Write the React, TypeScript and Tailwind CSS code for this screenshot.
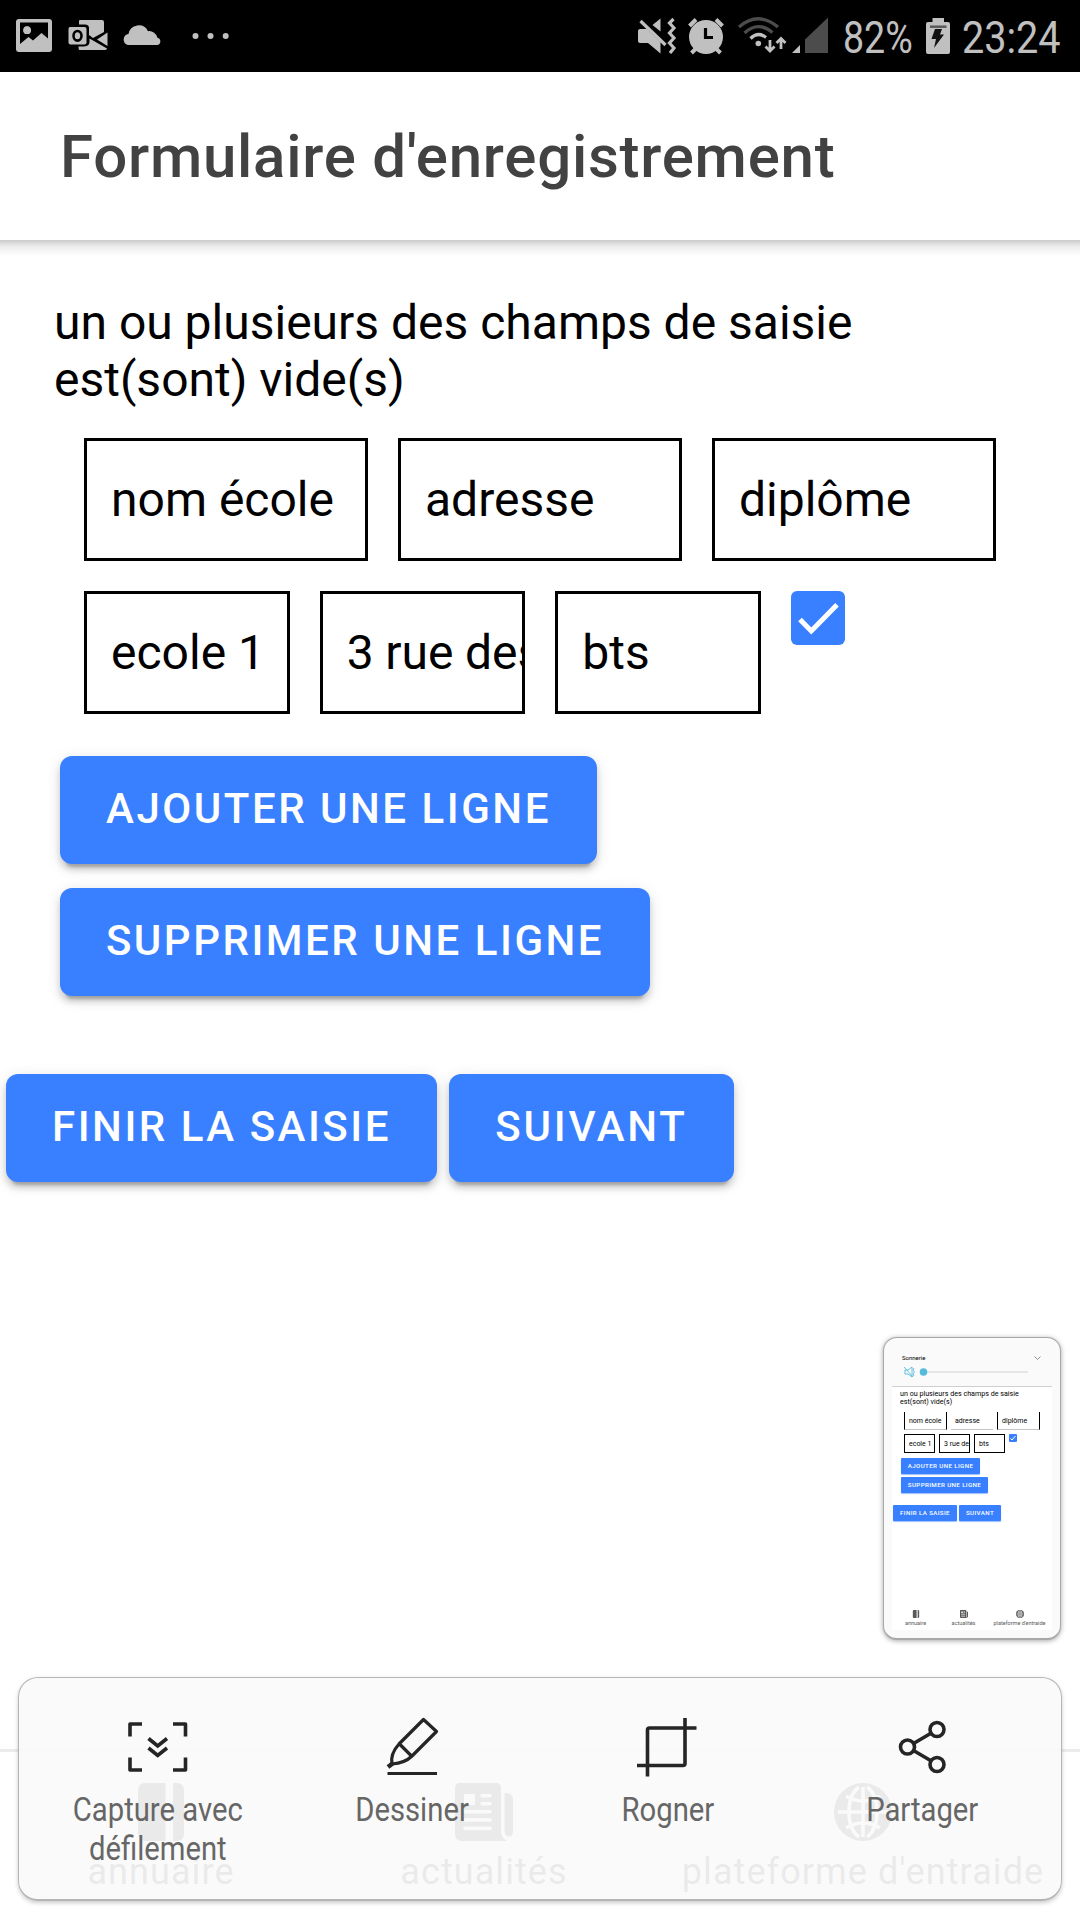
import type { ReactNode } from "react";

const G = "#c0c0c0";
const INK = "#252525";

function StatusBar() {
  return (
    <div className="flex h-[72px] shrink-0 items-center bg-black text-[45px] leading-[72px] text-[#c0c0c0]">
      <svg className="h-[72px] w-[240px] shrink-0" viewBox="0 0 240 72">
        <path
          fillRule="evenodd"
          fill={G}
          d="M19 19H49Q52 19 52 22V49Q52 52 49 52H19Q16 52 16 49V22Q16 19 19 19ZM20 22.500V44L28.500 37L33 40.500L41.500 33L48 38.500V22.500ZM27 26.300A3.700 3.900 0 1 1 27 34.100A3.700 3.900 0 1 1 27 26.300Z"
        />
        <circle cx="27.200" cy="30.200" r="3.800" fill={G} />
        <path fill={G} d="M80 20H102Q104 20 104 22V32L93 38L89 35V28Q89 24.500 85 24.500H79V21Q79 20 80 20Z" />
        <path fill={G} d="M107.500 32.500V46L97 39.500ZM89.500 38.500L107 48.500V49Q106 50 105 50H79.500Q78.500 50 78.500 46.500H84Q89.500 46 89.500 42Z" />
        <path fill={G} d="M70 27H84.500Q86.500 27 86.500 29V42.500Q86.500 44.500 84.500 44.500H70.500Q68.500 44.500 68.500 42.500V29Q68.500 27 70 27Z" />
        <ellipse cx="77.500" cy="35.800" rx="4" ry="4.800" fill="none" stroke="#000" strokeWidth="2.600" />
        <path fill={G} d="M128 45A5.600 5.600 0 0 1 128.500 34A10.300 10.300 0 0 1 148 31.200A8.500 8.500 0 0 1 157.500 37.800A3.700 3.700 0 0 1 157.500 45Z" />
        <circle cx="195.500" cy="36" r="3" fill={G} />
        <circle cx="210.500" cy="36" r="3" fill={G} />
        <circle cx="225.700" cy="36" r="3" fill={G} />
      </svg>
      <svg className="ml-[392px] h-[72px] w-[208px] shrink-0" viewBox="632 0 208 72">
        <path fill={G} d="M640 29H647L660.500 42V53.500L648 43H640Q638 43 638 41V31Q638 29 640 29ZM660.500 18.500V31.500L652.500 25Z" />
        <path d="M640.500 21L665.500 45" stroke={G} strokeWidth="3.200" />
        <path d="M673.500 19L669.500 23L674 28L669.500 33L674 38L669.500 43L674 48L670 53" fill="none" stroke={G} strokeWidth="3.200" />
        <circle cx="706" cy="37" r="17" fill={G} />
        <path d="M689.500 26L696 19.500M716 19.500L722.500 26M696.500 48L691.500 53M715.500 48L720.500 53" stroke={G} strokeWidth="4" />
        <path d="M705.500 28V37.500H713" fill="none" stroke="#000" strokeWidth="3.200" />
        <path d="M739 27Q758 10.500 778 27" fill="none" stroke="#4c4c4c" strokeWidth="3.200" />
        <path d="M744.500 33Q758 20.500 772.500 32.500" fill="none" stroke="#4c4c4c" strokeWidth="3.200" />
        <path d="M750.500 38.500Q758 31 766 37.500" fill="none" stroke={G} strokeWidth="3.200" />
        <circle cx="758.300" cy="43.500" r="2.800" fill={G} />
        <path d="M770 40V51M765.500 46.500L770 51L774.500 46.500M781 49V38.500M776.500 43L781 38.500L785.500 43" fill="none" stroke={G} strokeWidth="2.800" />
        <path d="M800 45V53H792Z" fill={G} />
        <path d="M828 17.500V53H805V39.500Z" fill="#4c4c4c" />
      </svg>
      <div className="w-[78px] shrink-0 pl-[3px] pt-[3px]">
        <span className="inline-block origin-left scale-x-[0.835]">82%</span>
      </div>
      <svg className="h-[72px] w-[42px] shrink-0" viewBox="918 0 42 72">
        <path fill={G} d="M928 22H932.500V18H944V22H948Q950 22 950 24V52Q950 54 948 54H928Q926 54 926 52V24Q926 22 928 22Z" />
        <path d="M930 26.700H946.500" stroke="#5a5a5a" strokeWidth="2.500" />
        <path d="M935 29H942L940 34.500H944L934 48L936 39H931.500Z" fill="#111" />
      </svg>
      <span className="ml-[2px] mt-[3px] inline-block origin-left scale-x-[0.88]">23:24</span>
    </div>
  );
}

function Field({ text, className }: { text: string; className: string }) {
  return (
    <div className={"flex h-[123px] shrink-0 items-center overflow-hidden whitespace-nowrap border-[3px] border-black pl-6 text-[48px] leading-[56px] text-black " + className}>
      {text}
    </div>
  );
}

function Button({ text, className }: { text: string; className: string }) {
  return (
    <button
      className={
        "block h-[108px] shrink-0 whitespace-nowrap rounded-[12px] bg-[#3880ff] pb-[3px] text-center text-[42px] font-medium leading-[49px] text-white shadow-[0_9px_3px_-6px_rgba(0,0,0,0.2),0_6px_6px_0_rgba(0,0,0,0.14),0_3px_15px_0_rgba(0,0,0,0.12)] " +
        className
      }
    >
      {text}
    </button>
  );
}

function AlbumIcon({ className }: { className: string }) {
  return (
    <svg className={className} viewBox="0 0 58 58" fill="currentColor">
      <path d="M13.500 0H33.500V58H13.500Q6 58 6 50.500V7.500Q6 0 13.500 0ZM41 0H44.500Q52 0 52 7.500V50.500Q52 58 44.500 58H41Z" />
    </svg>
  );
}

function NewsIcon({ className }: { className: string }) {
  return (
    <svg className={className} viewBox="0 0 58 58" fill="currentColor">
      <path
        fillRule="evenodd"
        d="M5 0H41Q46 0 46 5V47Q46 55 52 58H7Q0 58 0 51V5Q0 0 5 0ZM9 11V22H20V11ZM27 11A1.700 1.700 0 0 0 27 14.500H35A1.700 1.700 0 0 0 35 11ZM27 19A1.700 1.700 0 0 0 27 22.500H35A1.700 1.700 0 0 0 35 19ZM10 27A1.700 1.700 0 0 0 10 30.500H35A1.700 1.700 0 0 0 35 27ZM10 35A1.700 1.700 0 0 0 10 38.800H35A1.700 1.700 0 0 0 35 35ZM10 43.500A1.700 1.700 0 0 0 10 47.200H35A1.700 1.700 0 0 0 35 43.500Z"
      />
      <path d="M49.500 10H51Q58 10 58 17V48Q58 53.500 54 53.500T49.500 48Z" />
    </svg>
  );
}

function GlobeIcon({ className }: { className: string }) {
  return (
    <svg className={className} viewBox="0 0 58 58">
      <circle cx="29" cy="29" r="29" fill="currentColor" />
      <path
        d="M29 4V54M4 29H54M12 13Q29 23 46 13M12 45Q29 35 46 45M25 4Q15 11 15 29T25 54M33 4Q43 11 43 29T33 54"
        fill="none"
        stroke="#fff"
        strokeWidth="3.600"
      />
    </svg>
  );
}

function TabBar() {
  const tab = "flex flex-col items-center pt-[31px] text-[36px] leading-[42px] tracking-[0.03em]";
  return (
    <div className="flex h-[171px] shrink-0 border-t-[3px] border-[#ebebeb] text-[#595959]">
      <div className={tab + " w-[322px]"}>
        <AlbumIcon className="size-[58px]" />
        <span className="mt-[10px]">annuaire</span>
      </div>
      <div className={tab + " w-[324px]"}>
        <NewsIcon className="size-[58px]" />
        <span className="mt-[10px]">actualités</span>
      </div>
      <div className={tab + " w-[434px]"}>
        <GlobeIcon className="size-[58px]" />
        <span className="mt-[10px]">plateforme d'entraide</span>
      </div>
    </div>
  );
}

function Action({ label, children }: { label: ReactNode; children: ReactNode }) {
  return (
    <div className="flex w-[255px] flex-col items-center">
      <svg className="size-[72px]" viewBox="0 0 72 72" fill="none" stroke={INK} strokeWidth="3.600">
        {children}
      </svg>
      <span className="mt-[8px] scale-x-[0.86] whitespace-nowrap text-center text-[34px] leading-[39px] text-[#666]">{label}</span>
    </div>
  );
}

function CapturePanel() {
  return (
    <div className="absolute left-[18px] top-[1677px] flex h-[224px] w-[1044px] rounded-[20px] border border-b-2 border-[#b5b5b5] bg-[#fafafa]/90 pl-[11px] pt-[32px] shadow-[0_2px_4px_rgba(0,0,0,0.2)]">
      <Action label={<>Capture avec<br />défilement</>}>
        <path d="M8 26.500V14H20M51 14H63.500V26.500M63.500 47.500V60H51M20 60H8V47.500" strokeLinejoin="round" />
        <path d="M26.500 28.500L35.700 36L45 28.500M26.500 38L35.700 45.500L45 38" />
      </Action>
      <Action label="Dessiner">
        <path d="M46.500 9.500L59.500 21.500L35 46Q28 53 15 54Q13 44 22 34ZM22.500 34L35 46.500M10.500 63.500H60" strokeWidth="3.200" strokeLinejoin="round" />
        <path d="M11 57L15.500 53.500" strokeWidth="4.500" />
      </Action>
      <Action label="Rogner">
        <path d="M64.500 18H17.500Q15.500 18 15.500 20V66.500M5 55.500H51Q53 55.500 53 53.500V8" strokeWidth="3.600" />
      </Action>
      <Action label="Partager">
        <circle cx="20.500" cy="37" r="7" />
        <circle cx="50" cy="19.500" r="7" />
        <circle cx="50" cy="54.500" r="7" />
        <path d="M26.500 33.500L43.500 23.500M26.500 40.500L43.500 50.500" />
      </Action>
    </div>
  );
}

function MiniButton({ text, className }: { text: string; className: string }) {
  return (
    <div className={"h-4 rounded-[1px] bg-[#3880ff] text-center text-[6.200px] font-medium leading-4 tracking-[0.06em] whitespace-nowrap text-white shadow-[0_1px_1px_rgba(56,128,255,0.5)] " + className}>
      {text}
    </div>
  );
}

function Thumbnail() {
  const cell = "overflow-hidden whitespace-nowrap pl-[4px] text-[7px] leading-[18px]";
  return (
    <div className="absolute left-[883px] top-[1337px] h-[303px] w-[178px] rounded-[14px] border border-b-2 border-[#a8a8a8] bg-[#fafafa] px-2 text-black shadow-[0_1px_5px_rgba(0,0,0,0.35)]">
      <div className="flex h-[48px] flex-col pl-[10px] pt-[14px]">
        <div className="flex h-[11px] items-center text-[6px] leading-[11px]">
          <span className="w-[132px]">Sonnerie</span>
          <svg className="h-[4px] w-[7px]" viewBox="0 0 7 4">
            <path d="M0.500 0.500L3.500 3.500L6.500 0.500" fill="none" stroke="#777" strokeWidth="0.800" />
          </svg>
        </div>
        <svg className="ml-px mt-[3px] h-[12px] w-[128px]" viewBox="0 0 128 12">
          <path d="M2 4H5L9 1V11L5 8H2ZM1 1L10 11M11 2L10 4L11.500 6L10 8L11 10" fill="none" stroke="#55bbdd" strokeWidth="0.900" />
          <path d="M20 6H125" stroke="#d2d2d2" />
          <circle cx="20.500" cy="6" r="3.800" fill="#55bbdd" />
        </svg>
      </div>
      <div className="flex h-[244px] flex-col border-t border-[#cfcfcf] bg-white">
        <div className="ml-[8px] mt-[3px] text-[7.150px] leading-[8.400px]">
          un ou plusieurs des champs de saisie
          <br />
          est(sont) vide(s)
        </div>
        <div className="ml-[12px] mt-[5px] flex gap-[4px]">
          <div className={cell + " h-[18px] w-[43px] border-x border-b border-x-black border-b-[#c4c4c4]"}>nom école</div>
          <div className={cell + " h-[18px] w-[42px] border-b border-[#c4c4c4]"}>adresse</div>
          <div className={cell + " h-[18px] w-[43px] border-x border-b border-x-black border-b-[#c4c4c4]"}>diplôme</div>
        </div>
        <div className="ml-[12px] mt-[4px] flex gap-[4px]">
          <div className={cell + " h-[19px] w-[31px] border border-black"}>ecole 1</div>
          <div className={cell + " h-[19px] w-[31px] border border-black"}>3 rue des</div>
          <div className={cell + " h-[19px] w-[31px] border border-black"}>bts</div>
          <svg className="size-[8px]" viewBox="0 0 8 8">
            <rect width="8" height="8" rx="1" fill="#3880ff" />
            <path d="M1.500 4.500L3 6L6.500 2" fill="none" stroke="#fff" />
          </svg>
        </div>
        <MiniButton className="ml-[9px] mt-[5px] w-[79px]" text="AJOUTER UNE LIGNE" />
        <MiniButton className="ml-[9px] mt-[3px] w-[87px]" text="SUPPRIMER UNE LIGNE" />
        <div className="ml-px mt-[12px] flex gap-[2px]">
          <MiniButton className="w-[64px]" text="FINIR LA SAISIE" />
          <MiniButton className="w-[42px]" text="SUIVANT" />
        </div>
        <div className="mt-auto flex pb-[3px] text-[5.500px] leading-[8px] text-[#595959]">
          <div className="flex w-[47px] flex-col items-center">
            <AlbumIcon className="size-[8px]" />
            <span className="mt-px">annuaire</span>
          </div>
          <div className="flex w-[49px] flex-col items-center">
            <NewsIcon className="size-[8px]" />
            <span className="mt-px">actualités</span>
          </div>
          <div className="flex w-[63px] flex-col items-center whitespace-nowrap">
            <GlobeIcon className="size-[8px]" />
            <span className="mt-px">plateforme d'entraide</span>
          </div>
        </div>
      </div>
    </div>
  );
}

export default function App() {
  return (
    <div className="relative flex h-[1920px] w-[1080px] flex-col overflow-hidden bg-white font-['Roboto',sans-serif]">
      <StatusBar />
      <header className="flex h-[168px] shrink-0 items-center pl-[60px] pt-[2px]">
        <h1 className="whitespace-nowrap text-[60px] font-medium leading-[70px] tracking-[0.0125em] text-[#424242]">
          Formulaire d'enregistrement
        </h1>
      </header>
      <div className="h-[16px] shrink-0 bg-linear-to-b from-[#cbcbcb] via-[#ececec] via-40% to-white" />
      <main className="flex flex-1 flex-col">
        <p className="ml-[54px] mt-[38px] text-[48px] leading-[57px] text-black">
          un ou plusieurs des champs de saisie
          <br />
          est(sont) vide(s)
        </p>
        <div className="ml-[84px] mt-[30px] flex gap-[30px]">
          <Field className="w-[284px]" text="nom école" />
          <Field className="w-[284px]" text="adresse" />
          <Field className="w-[284px]" text="diplôme" />
        </div>
        <div className="ml-[84px] mt-[30px] flex gap-[30px]">
          <Field className="w-[205.660px]" text="ecole 1" />
          <Field className="w-[205.660px] tracking-[-0.002em]" text="3 rue des" />
          <Field className="w-[205.660px]" text="bts" />
          <svg className="size-[54px]" viewBox="0 0 54 54">
            <rect width="54" height="54" rx="6" fill="#3880ff" />
            <path d="M9 28.500L20.300 40L46 13.800" fill="none" stroke="#fff" strokeWidth="5" />
          </svg>
        </div>
        <Button className="ml-[60px] mt-[42px] w-[537px] tracking-[0.06em]" text="AJOUTER UNE LIGNE" />
        <Button className="ml-[60px] mt-[24px] w-[590px] tracking-[0.06em]" text="SUPPRIMER UNE LIGNE" />
        <div className="ml-[6px] mt-[78px] flex gap-[12px]">
          <Button className="w-[431px] tracking-[0.06em]" text="FINIR LA SAISIE" />
          <Button className="w-[285px] tracking-[0.066em]" text="SUIVANT" />
        </div>
      </main>
      <TabBar />
      <Thumbnail />
      <CapturePanel />
    </div>
  );
}
